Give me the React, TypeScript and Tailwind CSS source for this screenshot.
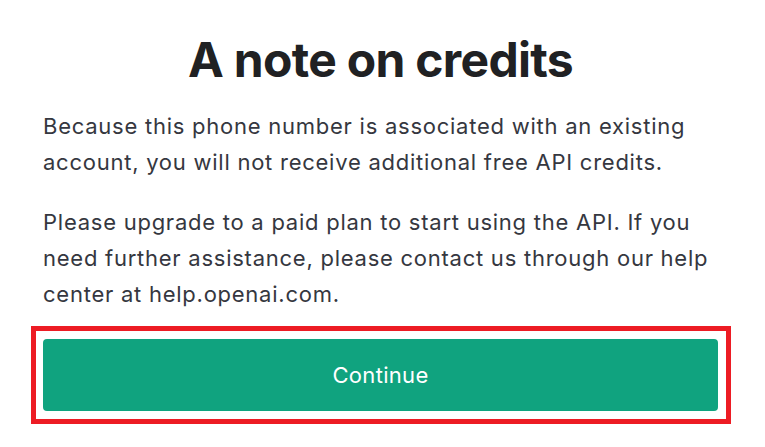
import React from 'react';

export default function App() {
  const font = { fontFamily: 'Inter, "Liberation Sans", sans-serif' };

  return (
    <div className="w-[765px] h-[447px] bg-white overflow-hidden" style={font}>
      <div className="pt-[28px]">
        <h1 className="text-center text-[48px] leading-[64px] font-bold tracking-[-0.7px] text-[#202123] pl-[43px] pr-[47px]">
          A note on credits
        </h1>

        <div className="pl-[43px] pr-[47px] mt-[16px] text-[22px] leading-[36px] tracking-[0.75px] text-[#353740]">
          <p>
            Because this phone number is associated with an existing account, you will not receive additional free API credits.
          </p>
          <p className="mt-[24px]">
            Please upgrade to a paid plan to start using the API. If you need further assistance, please contact us through our help center at help.openai.com.
          </p>
        </div>

        {/* highlighted button */}
        <div className="ml-[31px] mt-[14px] w-[700px] border-[5px] border-[#ed1c24] pl-[7px] pr-[8px] py-[8px]">
          <button className="w-full h-[72px] rounded-[4px] bg-[#10a37f] text-white text-[22px] tracking-[0.3px] flex items-center justify-center">
            Continue
          </button>
        </div>
      </div>
    </div>
  );
}
